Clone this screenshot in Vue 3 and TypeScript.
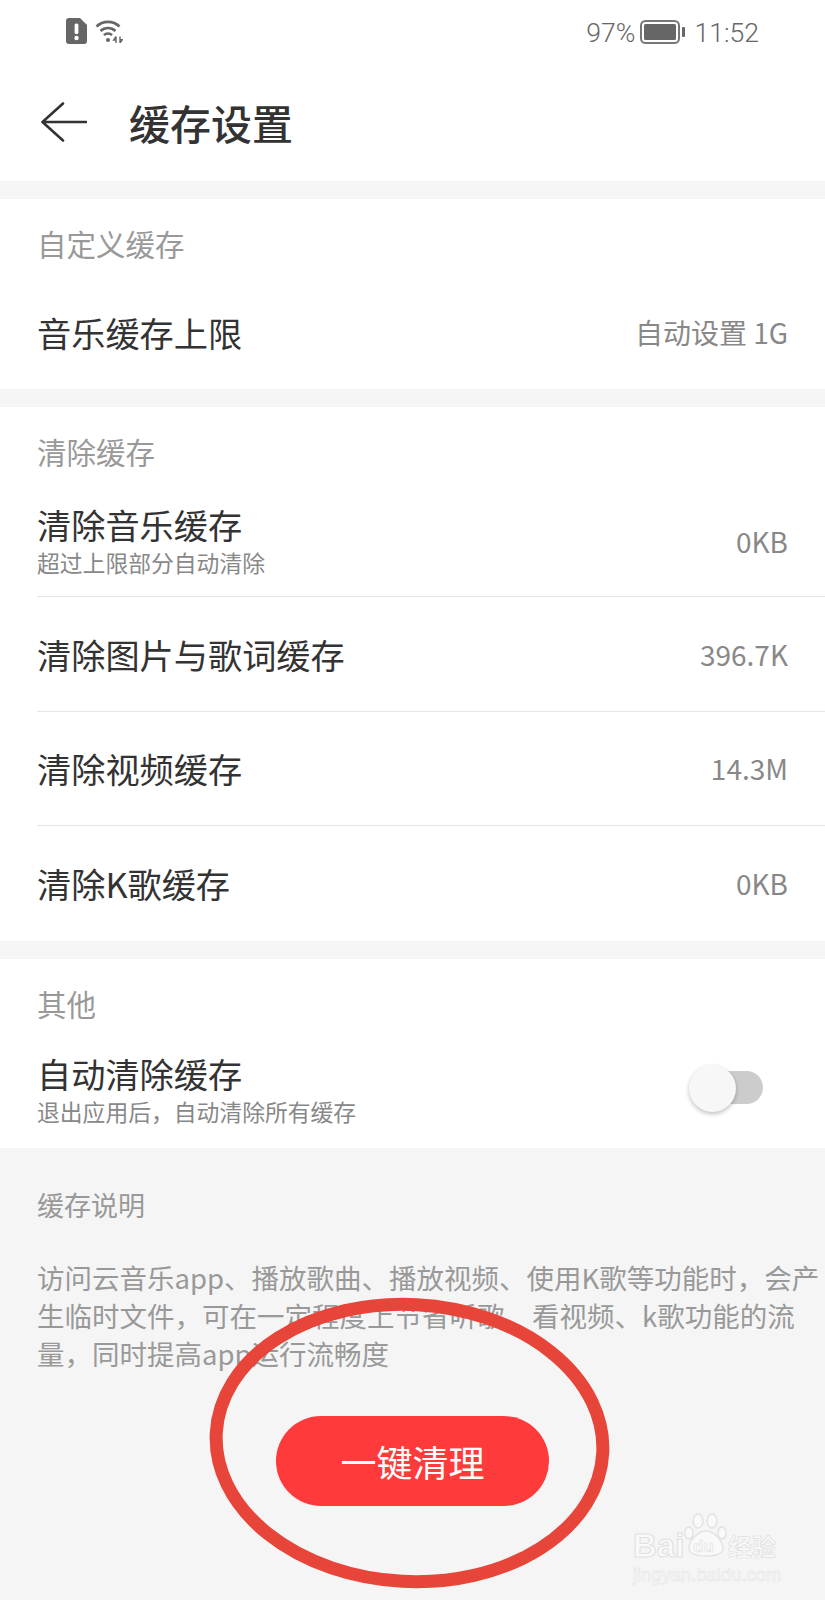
<template>
  <div class="page">
    <div class="status-bar">
      <div class="status-left">
        <svg class="sim-icon" width="21" height="26" viewBox="0 0 21 26">
          <path d="M3 0h11l7 7v16a3 3 0 0 1-3 3H3a3 3 0 0 1-3-3V3a3 3 0 0 1 3-3z" fill="#666" />
          <rect x="8.6" y="5.5" width="3.8" height="10.5" rx="1.6" fill="#fff" />
          <circle cx="10.5" cy="20" r="2.2" fill="#fff" />
        </svg>
        <svg width="28" height="24" viewBox="0 0 28 24" fill="none" stroke="#666" stroke-width="2.6">
          <path d="M1.5 7.5a16.5 16.5 0 0 1 23 0" />
          <path d="M5.5 12a11 11 0 0 1 15 0" />
          <path d="M9 16.2a5.6 5.6 0 0 1 8 0" />
          <circle cx="13" cy="21" r="2" fill="#666" stroke="none" />
          <path d="M21 17.5l-2.4 3.6h2.4M21 17.5V24M25 17.5V24l2.4-3.4H25" stroke-width="1.4" />
        </svg>
      </div>
      <div class="status-right">
        <span>97%</span>
        <svg width="46" height="24" viewBox="0 0 46 24">
          <rect x="1" y="1" width="38" height="22" rx="4.5" fill="none" stroke="#777" stroke-width="2" />
          <rect x="4" y="4" width="32" height="16" rx="1.5" fill="#666" />
          <rect x="42" y="7" width="3" height="10" rx="1" fill="#666" />
        </svg>
        <span class="clock">11:52</span>
      </div>
    </div>

    <header class="nav">
      <svg width="46" height="40" viewBox="0 0 46 40" fill="none" stroke="#333" stroke-width="2.6" stroke-linecap="round" stroke-linejoin="round">
        <path d="M22 1.5 1.5 20 22 38.5M2 20h43" />
      </svg>
      <h1>缓存设置</h1>
    </header>

    <section v-for="group in groups" :key="group.title" class="group">
      <div class="group-title">{{ group.title }}</div>
      <div
        v-for="row in group.rows"
        :key="row.label"
        class="row"
        :class="[row.sub ? 'row-tall' : '', group.kind]"
      >
        <div class="row-main">
          <div class="row-label">{{ row.label }}</div>
          <div v-if="row.sub" class="row-sub">{{ row.sub }}</div>
        </div>
        <div v-if="row.value" class="row-value">{{ row.value }}</div>
        <div v-if="row.toggle" class="switch"><span class="knob"></span></div>
      </div>
    </section>

    <div class="notes">
      <div class="notes-title">缓存说明</div>
      <p>访问云音乐app、播放歌曲、播放视频、使用K歌等功能时，会产生临时文件，可在一定程度上节省听歌、看视频、k歌功能的流量，同时提高app运行流畅度</p>
      <button class="clean-btn">一键清理</button>
    </div>

    <!-- 手绘红圈标注 -->
    <svg class="circle-mark" width="412" height="304" viewBox="0 0 412 304" fill="none">
      <ellipse cx="204.5" cy="147" rx="193.5" ry="138.5" stroke="#e8453a" stroke-width="13" transform="rotate(3 204.5 147)" />
    </svg>

    <!-- 水印 -->
    <div class="watermark">
      <div class="wm-main">
        <span class="wm-bai">Bai</span>
        <span class="wm-paw">
          <svg width="44" height="44" viewBox="0 0 44 44" fill="#f9f9f9" stroke="#e2e2e2" stroke-width="1.4">
            <ellipse cx="14" cy="8" rx="5" ry="7" />
            <ellipse cx="28" cy="8" rx="5" ry="7" />
            <ellipse cx="5" cy="20" rx="4.2" ry="6" />
            <ellipse cx="38" cy="20" rx="4.2" ry="6" />
            <path d="M22 18c-7 0-17 9-17 17 0 6 8 8 17 8s17-2 17-8c0-8-10-17-17-17z" />
          </svg>
          <span class="wm-du">du</span>
        </span>
        <span class="wm-cn">经验</span>
      </div>
      <div class="wm-sub">jingyan.baidu.com</div>
    </div>
  </div>
</template>

<script setup lang="ts">
interface Row {
  label: string
  sub?: string
  value?: string
  toggle?: boolean
}

interface Group {
  title: string
  kind: string
  rows: Row[]
}

const groups: Group[] = [
  {
    title: '自定义缓存',
    kind: 'custom',
    rows: [{ label: '音乐缓存上限', value: '自动设置 1G' }]
  },
  {
    title: '清除缓存',
    kind: 'clear',
    rows: [
      { label: '清除音乐缓存', sub: '超过上限部分自动清除', value: '0KB' },
      { label: '清除图片与歌词缓存', value: '396.7K' },
      { label: '清除视频缓存', value: '14.3M' },
      { label: '清除K歌缓存', value: '0KB' }
    ]
  },
  {
    title: '其他',
    kind: 'other',
    rows: [{ label: '自动清除缓存', sub: '退出应用后，自动清除所有缓存', toggle: true }]
  }
]
</script>

<style scoped>
.page {
  position: relative;
  width: 825px;
  height: 1600px;
  overflow: hidden;
  background: #f5f5f5;
  font-family: "Noto Sans CJK SC", "Noto Sans", sans-serif;
  color: #333;
}

.status-bar {
  height: 64px;
  padding: 0 66px;
  background: #fff;
  display: flex;
  align-items: center;
  justify-content: space-between;
  box-sizing: border-box;
}

.status-left {
  display: flex;
  align-items: center;
  gap: 8px;
  margin-bottom: 3px;
}

.status-right {
  display: flex;
  align-items: center;
  gap: 5px;
  font-family: Roboto, sans-serif;
  font-size: 26.6px;
  font-weight: 300;
  color: #666;
}

.clock {
  margin-left: 3px;
}

.nav {
  height: 117px;
  padding: 0 0 1px 41px;
  background: #fff;
  display: flex;
  align-items: center;
  gap: 42px;
  box-sizing: border-box;
}

.nav h1 {
  margin: 0;
  font-size: 41px;
  font-weight: 500;
  color: #333;
}

.group {
  margin-top: 18px;
  padding-top: 26px;
  background: #fff;
}

.group-title {
  padding-left: 37px;
  font-size: 29.5px;
  line-height: 36px;
  color: #999;
}

.row {
  height: 114.5px;
  margin-left: 37px;
  padding-right: 37px;
  display: flex;
  align-items: center;
  justify-content: space-between;
  border-bottom: 1px solid #e6e6e6;
  box-sizing: border-box;
}

.row:last-child {
  border-bottom: 0;
}

.row-tall {
  height: 128px;
  padding-top: 17px;
}

.row.custom {
  height: 128px;
  padding-top: 13px;
}

.row.other {
  height: 127.5px;
  padding-top: 12px;
}

.row-label {
  font-size: 34.2px;
  line-height: 42px;
  color: #333;
}

.row-sub {
  margin-top: 2px;
  font-size: 22.8px;
  line-height: 32px;
  color: #888;
}

.row-value {
  font-size: 28px;
  color: #888;
}

.switch {
  position: relative;
  width: 60px;
  height: 33px;
  margin-top: -6px;
  margin-right: 25px;
  border-radius: 17px;
  background: #ccc;
}

.knob {
  position: absolute;
  left: -14px;
  top: -6px;
  width: 47px;
  height: 47px;
  border-radius: 50%;
  background: #f7f7f7;
  box-shadow: 0 2px 4px rgba(0, 0, 0, 0.25);
}

.notes {
  padding: 39px 0 0 37px;
}

.notes-title {
  font-size: 27px;
  line-height: 36px;
  color: #999;
}

.notes p {
  margin: 36px 0 0;
  font-size: 27.5px;
  line-height: 37.8px;
  color: #999;
}

.clean-btn {
  display: block;
  width: 273px;
  height: 90px;
  margin: 44px 0 0 239px;
  border: 0;
  border-radius: 45px;
  background: #ff3a3a;
  color: #fff;
  font-family: inherit;
  font-size: 36px;
}

.circle-mark {
  position: absolute;
  left: 205px;
  top: 1296px;
}

.watermark {
  position: absolute;
  left: 633px;
  top: 1512px;
  width: 150px;
  color: #f9f9f9;
  font-family: "Liberation Sans", "Noto Sans CJK SC", sans-serif;
}

.wm-main {
  display: flex;
  align-items: flex-end;
  height: 46px;
}

.wm-bai {
  width: 51px;
  font-size: 33px;
  font-weight: 700;
  line-height: 24px;
  -webkit-text-stroke: 1px #e0e0e0;
}

.wm-paw {
  position: relative;
  width: 44px;
  height: 44px;
  margin-bottom: 1px;
}

.wm-du {
  position: absolute;
  left: 9px;
  bottom: 1px;
  font-size: 17px;
  font-weight: 700;
  line-height: 18px;
  -webkit-text-stroke: 0.6px #e0e0e0;
}

.wm-cn {
  font-family: "Noto Sans CJK SC", sans-serif;
  font-size: 24px;
  font-weight: 700;
  line-height: 24px;
  white-space: nowrap;
  -webkit-text-stroke: 0.7px #e0e0e0;
}

.wm-sub {
  margin-top: 6px;
  font-size: 18.4px;
  line-height: 22px;
  white-space: nowrap;
  -webkit-text-stroke: 0.5px #e2e2e2;
}
</style>

<style>
body {
  background: #f5f5f5;
}
</style>
